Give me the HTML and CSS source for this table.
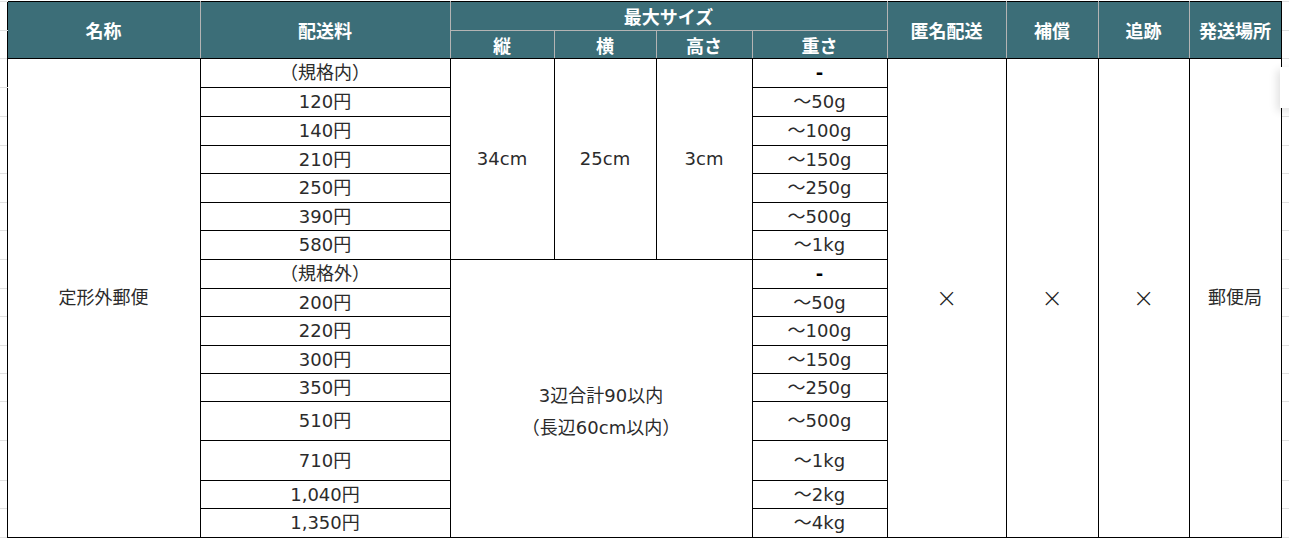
FILE: index.html
```html
<!DOCTYPE html>
<html lang="ja">
<head>
<meta charset="utf-8">
<title>定形外郵便</title>
<link rel="stylesheet" href="styles.css">
</head>
<body>
<table class="sheet">
  <colgroup>
    <col class="c-gutl">
    <col class="c-name">
    <col class="c-fee">
    <col class="c-h">
    <col class="c-w">
    <col class="c-d">
    <col class="c-wt">
    <col class="c-anon">
    <col class="c-comp">
    <col class="c-track">
    <col class="c-place">
    <col class="c-gutr">
  </colgroup>
  <thead>
    <tr class="h1">
      <td class="gut"></td>
      <th rowspan="2">名称</th>
      <th rowspan="2">配送料</th>
      <th colspan="4" class="grp">最大サイズ</th>
      <th rowspan="2">匿名配送</th>
      <th rowspan="2">補償</th>
      <th rowspan="2">追跡</th>
      <th rowspan="2" class="last">発送場所</th>
      <td class="gut gr"></td>
    </tr>
    <tr class="h2">
      <td class="gut"></td>
      <th class="sub">縦</th>
      <th class="sub">横</th>
      <th class="sub">高さ</th>
      <th class="sub">重さ</th>
      <td class="gut gr"></td>
    </tr>
  </thead>
  <tbody>
    <tr class="r29">
      <td class="gut"></td>
      <td rowspan="16">定形外郵便</td>
      <td>（規格内）</td>
      <td rowspan="7">34cm</td>
      <td rowspan="7">25cm</td>
      <td rowspan="7">3cm</td>
      <td class="dash">-</td>
      <td rowspan="16" class="x">×</td>
      <td rowspan="16" class="x">×</td>
      <td rowspan="16" class="x">×</td>
      <td rowspan="16">郵便局</td>
      <td class="gut gr"></td>
    </tr>
    <tr class="r29"><td class="gut"></td><td>120円</td><td>～50g</td><td class="gut gr"></td></tr>
    <tr class="r29"><td class="gut"></td><td>140円</td><td>～100g</td><td class="gut gr"></td></tr>
    <tr class="r28"><td class="gut"></td><td>210円</td><td>～150g</td><td class="gut gr"></td></tr>
    <tr class="r29"><td class="gut"></td><td>250円</td><td>～250g</td><td class="gut gr"></td></tr>
    <tr class="r28"><td class="gut"></td><td>390円</td><td>～500g</td><td class="gut gr"></td></tr>
    <tr class="r29"><td class="gut"></td><td>580円</td><td>～1kg</td><td class="gut gr"></td></tr>
    <tr class="r29">
      <td class="gut"></td>
      <td>（規格外）</td>
      <td rowspan="9" colspan="3" class="total"><span class="line">3辺合計90以内</span><span class="line">（長辺60cm以内）</span></td>
      <td class="dash">-</td>
      <td class="gut gr"></td>
    </tr>
    <tr class="r28"><td class="gut"></td><td>200円</td><td>～50g</td><td class="gut gr"></td></tr>
    <tr class="r29"><td class="gut"></td><td>220円</td><td>～100g</td><td class="gut gr"></td></tr>
    <tr class="r28"><td class="gut"></td><td>300円</td><td>～150g</td><td class="gut gr"></td></tr>
    <tr class="r28"><td class="gut"></td><td>350円</td><td>～250g</td><td class="gut gr"></td></tr>
    <tr class="r39"><td class="gut"></td><td>510円</td><td>～500g</td><td class="gut gr"></td></tr>
    <tr class="r40"><td class="gut"></td><td>710円</td><td>～1kg</td><td class="gut gr"></td></tr>
    <tr class="r28"><td class="gut"></td><td>1,040円</td><td>～2kg</td><td class="gut gr"></td></tr>
    <tr class="r29"><td class="gut"></td><td>1,350円</td><td>～4kg</td><td class="gut gr"></td></tr>
  </tbody>
</table>
<div class="floater"></div>
</body>
</html>
```

FILE: styles.css
```css
html, body {
  margin: 0;
  padding: 0;
  background: #ffffff;
}

body {
  padding-top: 1px;
  font-family: "DejaVu Sans", "Noto Sans CJK JP", sans-serif;
  color: #2b2b2b;
  position: relative;
  overflow: hidden;
  height: 541px;
}

.sheet {
  border-collapse: collapse;
  table-layout: fixed;
  width: 1289px;
  font-size: 18px;
}

.c-gutl { width: 7px; }
.c-name { width: 193px; }
.c-fee { width: 250px; }
.c-h { width: 104px; }
.c-w { width: 102px; }
.c-d { width: 96px; }
.c-wt { width: 135px; }
.c-anon { width: 119px; }
.c-comp { width: 92px; }
.c-track { width: 91px; }
.c-place { width: 92px; }
.c-gutr { width: 8px; }

.sheet td,
.sheet th {
  padding: 0;
  text-align: center;
  vertical-align: middle;
  line-height: 20px;
  white-space: nowrap;
}

.sheet td {
  border: 1px solid #000000;
}

.sheet th {
  background: #3c6e78;
  color: #ffffff;
  font-family: "Noto Sans CJK JP", sans-serif;
  font-size: 18px;
  font-weight: 700;
  border-top: 1px solid #000000;
  border-bottom: 1px solid #000000;
  border-left: 1px solid #b4b4b4;
  border-right: 1px solid #b4b4b4;
}

.sheet th.grp {
  border-bottom: 1px solid #b4b4b4;
}

.sheet th.sub {
  border-top: 1px solid #b4b4b4;
}

.sheet .h1 th:first-of-type {
  border-left: 1px solid #000000;
}

.sheet th.last {
  border-right: 1px solid #000000;
}

.sheet td.gut {
  border-top: 1px solid #e1e1e1;
  border-bottom: 1px solid #e1e1e1;
  border-left: 0 none;
  border-right: 0 none;
  background: #ffffff;
}

.h1 { height: 29px; }
.h2 { height: 28px; }
.r28 { height: 28px; }
.r29 { height: 29px; }
.r39 { height: 39px; }
.r40 { height: 40px; }

.dash {
  font-weight: 700;
  color: #000000;
}

.x {
  font-size: 26px;
  font-weight: 200;
  color: #222222;
}

.total {
  padding-top: 26px !important;
}

.total .line {
  display: block;
  line-height: 32px;
}

.floater {
  position: absolute;
  left: 1280px;
  top: 67px;
  width: 20px;
  height: 41px;
  background: #ffffff;
  box-shadow: -3px 3px 8px rgba(0, 0, 0, 0.12);
}
```
